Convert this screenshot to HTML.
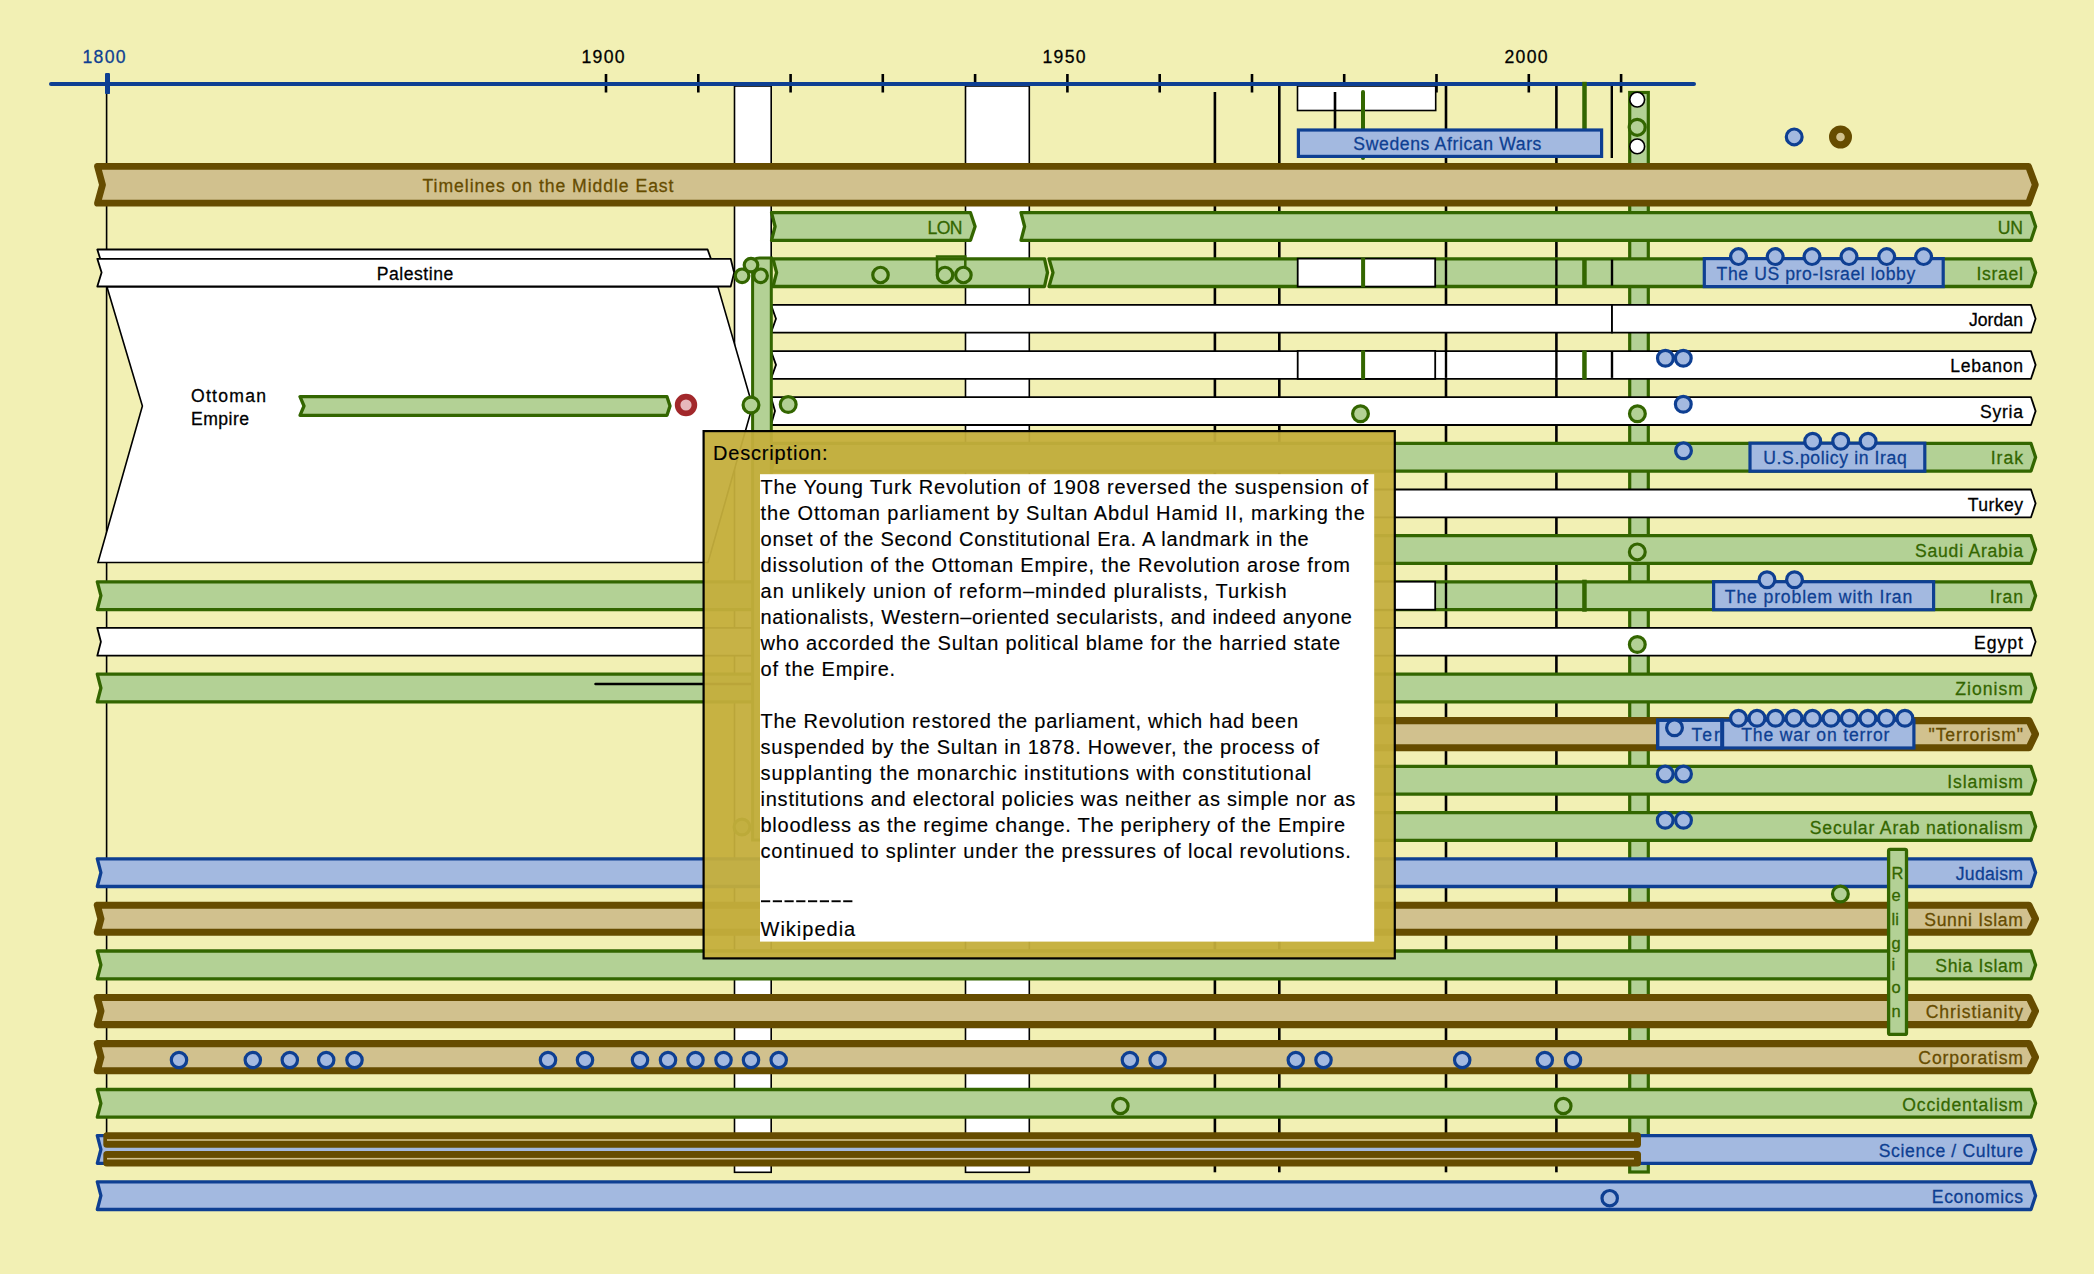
<!DOCTYPE html>
<html><head><meta charset="utf-8"><style>
html,body{margin:0;padding:0;background:#F2F0B4;width:2094px;height:1274px;overflow:hidden}
svg{display:block;font-family:"Liberation Sans",sans-serif}
</style></head><body>
<svg width="2094" height="1274" viewBox="0 0 2094 1274">
<rect width="2094" height="1274" fill="#F2F0B4"/>
<rect x="105" y="73" width="5" height="21" rx="1.5" fill="#0E3F92"/>
<rect x="604.7" y="74.0" width="2.6" height="18.5" fill="#000"/>
<rect x="697.0" y="74.0" width="2.6" height="18.5" fill="#000"/>
<rect x="789.3" y="74.0" width="2.6" height="18.5" fill="#000"/>
<rect x="881.5" y="74.0" width="2.6" height="18.5" fill="#000"/>
<rect x="973.8" y="74.0" width="2.6" height="18.5" fill="#000"/>
<rect x="1066.1" y="74.0" width="2.6" height="18.5" fill="#000"/>
<rect x="1158.4" y="74.0" width="2.6" height="18.5" fill="#000"/>
<rect x="1250.7" y="74.0" width="2.6" height="18.5" fill="#000"/>
<rect x="1342.9" y="74.0" width="2.6" height="18.5" fill="#000"/>
<rect x="1435.2" y="74.0" width="2.6" height="18.5" fill="#000"/>
<rect x="1527.5" y="74.0" width="2.6" height="18.5" fill="#000"/>
<rect x="1619.8" y="74.0" width="2.6" height="18.5" fill="#000"/>
<text x="104" y="63" text-anchor="middle" fill="#0E3F92" stroke="#0E3F92" stroke-width="0.28" font-size="17.6" textLength="43">1800</text>
<text x="603" y="63" text-anchor="middle" fill="#000" stroke="#000" stroke-width="0.28" font-size="17.6" textLength="43">1900</text>
<text x="1064" y="63" text-anchor="middle" fill="#000" stroke="#000" stroke-width="0.28" font-size="17.6" textLength="43">1950</text>
<text x="1526" y="63" text-anchor="middle" fill="#000" stroke="#000" stroke-width="0.28" font-size="17.6" textLength="43">2000</text>
<rect x="105.8" y="94.0" width="1.6" height="1046.0" fill="#000"/>
<rect x="734.5" y="86.0" width="36.7" height="1086.3" fill="#fff" stroke="#000" stroke-width="1.6"/>
<rect x="965.5" y="86.0" width="63.8" height="1086.3" fill="#fff" stroke="#000" stroke-width="1.6"/>
<rect x="1213.6" y="92.0" width="2.6" height="1080.3" fill="#000"/>
<rect x="1278.0" y="86.0" width="2.6" height="1086.3" fill="#000"/>
<rect x="1444.7" y="86.0" width="2.6" height="1086.3" fill="#000"/>
<rect x="1555.1" y="86.0" width="2.6" height="1086.3" fill="#000"/>
<rect x="1297.5" y="86.0" width="138.2" height="24.5" fill="#fff" stroke="#000" stroke-width="1.6"/>
<rect x="1333.7" y="92.0" width="2.6" height="38.0" fill="#000"/>
<line x1="1363" y1="92" x2="1363" y2="158" stroke="#336600" stroke-width="4" stroke-linecap="round"/>
<rect x="1610.6" y="86.0" width="2.4" height="72.0" fill="#000"/>
<rect x="1629.7" y="92.5" width="18.6" height="1079.5" fill="#B3D195" stroke="#336600" stroke-width="3.2"/>
<line x1="51" y1="84" x2="1694" y2="84" stroke="#0E3F92" stroke-width="4" stroke-linecap="round"/>
<rect x="105" y="73" width="5" height="21" rx="1.5" fill="#0E3F92"/>
<line x1="1584.5" y1="81.8" x2="1584.5" y2="158" stroke="#336600" stroke-width="4.5"/>
<path d="M97.5,166.4 L2028.5,166.4 L2035.3,184.8 L2028.5,203.2 L97.5,203.2 L102.5,184.8 Z" fill="#D1C18E" stroke="#664C00" stroke-width="6.8" stroke-linejoin="round"/>
<text x="548" y="192.3" text-anchor="middle" fill="#664C00" stroke="#664C00" stroke-width="0.28" font-size="17.6" textLength="251" lengthAdjust="spacing">Timelines on the Middle East</text>
<path d="M771.5,212.7 L970.5,212.7 L975.1,226.5 L970.5,240.3 L771.5,240.3 L775.1,226.5 Z" fill="#B3D195" stroke="#336600" stroke-width="3.3" stroke-linejoin="round"/>
<text x="962.5" y="233.7" text-anchor="end" fill="#336600" stroke="#336600" stroke-width="0.28" font-size="17.6" textLength="35.0" lengthAdjust="spacing">LON</text>
<path d="M1021.0,212.7 L2031.0,212.7 L2035.6,226.5 L2031.0,240.3 L1021.0,240.3 L1024.6,226.5 Z" fill="#B3D195" stroke="#336600" stroke-width="3.3" stroke-linejoin="round"/>
<text x="2023.0" y="233.7" text-anchor="end" fill="#336600" stroke="#336600" stroke-width="0.28" font-size="17.6" textLength="25.2" lengthAdjust="spacing">UN</text>
<path d="M97.3,249.5 L707.6,249.5 L711,259 L100.3,259 Z" fill="#fff" stroke="#000" stroke-width="1.8" stroke-linejoin="round"/>
<path d="M97.3,258.8 L730.7,258.8 L734.1,272.6 L730.7,286.5 L97.3,286.5 L101.6,272.6 Z" fill="#FFFFFF" stroke="#000000" stroke-width="1.8" stroke-linejoin="round"/>
<text x="453.3" y="279.8" text-anchor="end" fill="#000000" stroke="#000000" stroke-width="0.28" font-size="17.6" textLength="76.6" lengthAdjust="spacing">Palestine</text>
<path d="M773.0,258.8 L1044.5,258.8 L1047.5,272.6 L1044.5,286.5 L773.0,286.5 L776.6,272.6 Z" fill="#B3D195" stroke="#336600" stroke-width="3.3" stroke-linejoin="round"/>
<path d="M1049.0,258.8 L2031.0,258.8 L2035.6,272.6 L2031.0,286.5 L1049.0,286.5 L1053.0,272.6 Z" fill="#B3D195" stroke="#336600" stroke-width="3.3" stroke-linejoin="round"/>
<text x="2023.0" y="279.8" text-anchor="end" fill="#336600" stroke="#336600" stroke-width="0.28" font-size="17.6" textLength="46.5" lengthAdjust="spacing">Israel</text>
<rect x="1297.7" y="258.6" width="137.5" height="28.0" fill="#fff" stroke="#000" stroke-width="1.8"/>
<rect x="1361.1" y="258.1" width="4" height="29.0" fill="#336600"/>
<rect x="1582.2" y="258.1" width="4.5" height="29.0" fill="#336600"/>
<rect x="1444.8" y="259.6" width="2.4" height="26.0" fill="#000"/>
<rect x="1555.2" y="259.6" width="2.4" height="26.0" fill="#000"/>
<rect x="1610.8" y="259.6" width="2.4" height="26.0" fill="#000"/>
<path d="M771.0,304.9 L1612.0,304.9 L1612.0,332.7 L771.0,332.7 L776.0,318.8 Z" fill="#FFFFFF" stroke="#000000" stroke-width="1.8" stroke-linejoin="round"/>
<path d="M1612.0,304.9 L2031.0,304.9 L2035.6,318.8 L2031.0,332.7 L1612.0,332.7 Z" fill="#FFFFFF" stroke="#000000" stroke-width="1.8" stroke-linejoin="round"/>
<text x="2023.0" y="326.0" text-anchor="end" fill="#000000" stroke="#000000" stroke-width="0.28" font-size="17.6" textLength="54.1" lengthAdjust="spacing">Jordan</text>
<path d="M771.0,351.1 L2031.0,351.1 L2035.6,364.9 L2031.0,378.8 L771.0,378.8 L776.0,364.9 Z" fill="#FFFFFF" stroke="#000000" stroke-width="1.8" stroke-linejoin="round"/>
<text x="2023.0" y="372.1" text-anchor="end" fill="#000000" stroke="#000000" stroke-width="0.28" font-size="17.6" textLength="72.8" lengthAdjust="spacing">Lebanon</text>
<rect x="1297.7" y="350.9" width="137.5" height="28.0" fill="#fff" stroke="#000" stroke-width="1.8"/>
<rect x="1361.1" y="350.4" width="4" height="29.0" fill="#336600"/>
<rect x="1582.2" y="350.4" width="4.5" height="29.0" fill="#336600"/>
<rect x="1444.8" y="351.9" width="2.4" height="26.0" fill="#000"/>
<rect x="1555.2" y="351.9" width="2.4" height="26.0" fill="#000"/>
<rect x="1610.8" y="351.9" width="2.4" height="26.0" fill="#000"/>
<path d="M771.0,397.2 L2031.0,397.2 L2035.6,411.1 L2031.0,425.0 L771.0,425.0 L775.0,411.1 Z" fill="#FFFFFF" stroke="#000000" stroke-width="1.8" stroke-linejoin="round"/>
<text x="2023.0" y="418.3" text-anchor="end" fill="#000000" stroke="#000000" stroke-width="0.28" font-size="17.6" textLength="43.0" lengthAdjust="spacing">Syria</text>
<path d="M771.0,443.4 L2031.0,443.4 L2035.6,457.2 L2031.0,471.1 L771.0,471.1 L775.0,457.2 Z" fill="#B3D195" stroke="#336600" stroke-width="3.3" stroke-linejoin="round"/>
<text x="2023.0" y="464.4" text-anchor="end" fill="#336600" stroke="#336600" stroke-width="0.28" font-size="17.6" textLength="32.3" lengthAdjust="spacing">Irak</text>
<path d="M771.0,489.5 L2031.0,489.5 L2035.6,503.4 L2031.0,517.3 L771.0,517.3 L775.0,503.4 Z" fill="#FFFFFF" stroke="#000000" stroke-width="1.8" stroke-linejoin="round"/>
<text x="2023.0" y="510.6" text-anchor="end" fill="#000000" stroke="#000000" stroke-width="0.28" font-size="17.6" textLength="55.3" lengthAdjust="spacing">Turkey</text>
<path d="M771.0,535.7 L2031.0,535.7 L2035.6,549.5 L2031.0,563.4 L771.0,563.4 L775.0,549.5 Z" fill="#B3D195" stroke="#336600" stroke-width="3.3" stroke-linejoin="round"/>
<text x="2023.0" y="556.8" text-anchor="end" fill="#336600" stroke="#336600" stroke-width="0.28" font-size="17.6" textLength="107.9" lengthAdjust="spacing">Saudi Arabia</text>
<path d="M97.3,581.9 L2031.0,581.9 L2035.6,595.7 L2031.0,609.6 L97.3,609.6 L100.9,595.7 Z" fill="#B3D195" stroke="#336600" stroke-width="3.3" stroke-linejoin="round"/>
<text x="2023.0" y="602.9" text-anchor="end" fill="#336600" stroke="#336600" stroke-width="0.28" font-size="17.6" textLength="33.2" lengthAdjust="spacing">Iran</text>
<rect x="1297.7" y="581.7" width="137.5" height="28.0" fill="#fff" stroke="#000" stroke-width="1.8"/>
<rect x="1582.2" y="579.7" width="4.5" height="32.0" fill="#336600"/>
<rect x="1444.8" y="582.7" width="2.4" height="26.0" fill="#000"/>
<rect x="1555.2" y="582.7" width="2.4" height="26.0" fill="#000"/>
<path d="M97.3,627.9 L2031.0,627.9 L2035.6,641.8 L2031.0,655.7 L97.3,655.7 L100.9,641.8 Z" fill="#FFFFFF" stroke="#000000" stroke-width="1.8" stroke-linejoin="round"/>
<text x="2023.0" y="649.0" text-anchor="end" fill="#000000" stroke="#000000" stroke-width="0.28" font-size="17.6" textLength="49.1" lengthAdjust="spacing">Egypt</text>
<path d="M97.3,674.1 L2031.0,674.1 L2035.6,688.0 L2031.0,701.9 L97.3,701.9 L100.9,688.0 Z" fill="#B3D195" stroke="#336600" stroke-width="3.3" stroke-linejoin="round"/>
<text x="2023.0" y="695.2" text-anchor="end" fill="#336600" stroke="#336600" stroke-width="0.28" font-size="17.6" textLength="67.7" lengthAdjust="spacing">Zionism</text>
<line x1="595.5" y1="684" x2="760" y2="684" stroke="#000" stroke-width="2.5" stroke-linecap="round"/>
<path d="M771.0,720.6 L2029.0,720.6 L2035.5,734.1 L2029.0,747.7 L771.0,747.7 L775.0,734.1 Z" fill="#D1C18E" stroke="#664C00" stroke-width="7.1" stroke-linejoin="round"/>
<text x="2023.0" y="741.4" text-anchor="end" fill="#664C00" stroke="#664C00" stroke-width="0.28" font-size="17.6" textLength="94.4" lengthAdjust="spacing">"Terrorism"</text>
<path d="M771.0,766.4 L2031.0,766.4 L2035.6,780.3 L2031.0,794.1 L771.0,794.1 L775.0,780.3 Z" fill="#B3D195" stroke="#336600" stroke-width="3.3" stroke-linejoin="round"/>
<text x="2023.0" y="787.5" text-anchor="end" fill="#336600" stroke="#336600" stroke-width="0.28" font-size="17.6" textLength="75.7" lengthAdjust="spacing">Islamism</text>
<path d="M771.0,812.6 L2031.0,812.6 L2035.6,826.4 L2031.0,840.3 L771.0,840.3 L775.0,826.4 Z" fill="#B3D195" stroke="#336600" stroke-width="3.3" stroke-linejoin="round"/>
<text x="2023.0" y="833.6" text-anchor="end" fill="#336600" stroke="#336600" stroke-width="0.28" font-size="17.6" textLength="213.2" lengthAdjust="spacing">Secular Arab nationalism</text>
<path d="M97.3,858.8 L2031.0,858.8 L2035.6,872.6 L2031.0,886.5 L97.3,886.5 L100.9,872.6 Z" fill="#A3B9E0" stroke="#0E3F92" stroke-width="3.3" stroke-linejoin="round"/>
<text x="2023.0" y="879.8" text-anchor="end" fill="#0E3F92" stroke="#0E3F92" stroke-width="0.28" font-size="17.6" textLength="67.2" lengthAdjust="spacing">Judaism</text>
<path d="M97.3,905.2 L2029.0,905.2 L2035.5,918.8 L2029.0,932.3 L97.3,932.3 L100.9,918.8 Z" fill="#D1C18E" stroke="#664C00" stroke-width="7.1" stroke-linejoin="round"/>
<text x="2023.0" y="926.0" text-anchor="end" fill="#664C00" stroke="#664C00" stroke-width="0.28" font-size="17.6" textLength="98.8" lengthAdjust="spacing">Sunni Islam</text>
<path d="M97.3,951.0 L2031.0,951.0 L2035.6,964.9 L2031.0,978.8 L97.3,978.8 L100.9,964.9 Z" fill="#B3D195" stroke="#336600" stroke-width="3.3" stroke-linejoin="round"/>
<text x="2023.0" y="972.1" text-anchor="end" fill="#336600" stroke="#336600" stroke-width="0.28" font-size="17.6" textLength="87.7" lengthAdjust="spacing">Shia Islam</text>
<path d="M97.3,997.5 L2029.0,997.5 L2035.5,1011.0 L2029.0,1024.6 L97.3,1024.6 L100.9,1011.0 Z" fill="#D1C18E" stroke="#664C00" stroke-width="7.1" stroke-linejoin="round"/>
<text x="2023.0" y="1018.2" text-anchor="end" fill="#664C00" stroke="#664C00" stroke-width="0.28" font-size="17.6" textLength="97.3" lengthAdjust="spacing">Christianity</text>
<path d="M97.3,1043.6 L2029.0,1043.6 L2035.5,1057.2 L2029.0,1070.7 L97.3,1070.7 L100.9,1057.2 Z" fill="#D1C18E" stroke="#664C00" stroke-width="7.1" stroke-linejoin="round"/>
<text x="2023.0" y="1064.4" text-anchor="end" fill="#664C00" stroke="#664C00" stroke-width="0.28" font-size="17.6" textLength="104.7" lengthAdjust="spacing">Corporatism</text>
<path d="M97.3,1089.5 L2031.0,1089.5 L2035.6,1103.3 L2031.0,1117.2 L97.3,1117.2 L100.9,1103.3 Z" fill="#B3D195" stroke="#336600" stroke-width="3.3" stroke-linejoin="round"/>
<text x="2023.0" y="1110.5" text-anchor="end" fill="#336600" stroke="#336600" stroke-width="0.28" font-size="17.6" textLength="120.8" lengthAdjust="spacing">Occidentalism</text>
<path d="M97.3,1135.7 L2031.0,1135.7 L2035.6,1149.5 L2031.0,1163.3 L97.3,1163.3 L100.9,1149.5 Z" fill="#A3B9E0" stroke="#0E3F92" stroke-width="3.3" stroke-linejoin="round"/>
<text x="2023.0" y="1156.7" text-anchor="end" fill="#0E3F92" stroke="#0E3F92" stroke-width="0.28" font-size="17.6" textLength="144.3" lengthAdjust="spacing">Science / Culture</text>
<path d="M97.3,1181.8 L2031.0,1181.8 L2035.6,1195.7 L2031.0,1209.5 L97.3,1209.5 L100.9,1195.7 Z" fill="#A3B9E0" stroke="#0E3F92" stroke-width="3.3" stroke-linejoin="round"/>
<text x="2023.0" y="1202.9" text-anchor="end" fill="#0E3F92" stroke="#0E3F92" stroke-width="0.28" font-size="17.6" textLength="91.2" lengthAdjust="spacing">Economics</text>
<path d="M107,287 L718,287 L752.5,406 L708,562.5 L98,562.5 L142.4,406 Z" fill="#fff" stroke="#000" stroke-width="1.6"/>
<text x="191" y="402" fill="#000" stroke="#000" stroke-width="0.28" font-size="17.6" textLength="75">Ottoman</text>
<text x="191" y="424.5" fill="#000" stroke="#000" stroke-width="0.28" font-size="17.6" textLength="58">Empire</text>
<path d="M300.0,396.7 L667.0,396.7 L670.0,406.0 L667.0,415.3 L300.0,415.3 L304.0,406.0 Z" fill="#B3D195" stroke="#336600" stroke-width="3.3" stroke-linejoin="round"/>
<circle cx="686" cy="405" r="8.4" fill="#E6B8BC" stroke="#A2282B" stroke-width="5.6"/>
<path d="M752.6,265 Q752.6,258 759.5,258 L771.3,258 L771.3,840 L752.6,840 Z" fill="#B3D195" stroke="#336600" stroke-width="3"/>
<circle cx="742.1" cy="275.8" r="6.8" fill="#B3D195" stroke="#336600" stroke-width="3.2"/>
<circle cx="751.0" cy="265.1" r="6.8" fill="#B3D195" stroke="#336600" stroke-width="3.2"/>
<circle cx="760.6" cy="275.8" r="6.8" fill="#B3D195" stroke="#336600" stroke-width="3.2"/>
<circle cx="880.5" cy="275.0" r="7.75" fill="#B3D195" stroke="#336600" stroke-width="3.2"/>
<circle cx="945.0" cy="275.0" r="7.75" fill="#B3D195" stroke="#336600" stroke-width="3.2"/>
<circle cx="963.4" cy="275.0" r="7.75" fill="#B3D195" stroke="#336600" stroke-width="3.2"/>
<path d="M937,273 L937,256.5 L965.3,256.5 L965.3,268" fill="none" stroke="#336600" stroke-width="2.5"/>
<circle cx="751.0" cy="405.0" r="7.9" fill="#B3D195" stroke="#336600" stroke-width="3.2"/>
<circle cx="788.2" cy="404.5" r="7.9" fill="#B3D195" stroke="#336600" stroke-width="3.2"/>
<circle cx="742.0" cy="827.0" r="7.9" fill="#B3D195" stroke="#336600" stroke-width="3.2"/>
<rect x="1298.4" y="130.0" width="303.2" height="26.4" fill="#A3B9E0" stroke="#0E3F92" stroke-width="3.2"/>
<text x="1353.3" y="150.4" fill="#0E3F92" stroke="#0E3F92" stroke-width="0.28" font-size="17.6" textLength="188.1" lengthAdjust="spacing">Swedens African Wars</text>
<circle cx="1637.2" cy="99.6" r="7.4" fill="#FFFFFF" stroke="#000000" stroke-width="1.6"/>
<circle cx="1637.2" cy="127.3" r="8" fill="#B3D195" stroke="#336600" stroke-width="3.2"/>
<circle cx="1637.2" cy="146.4" r="7.4" fill="#FFFFFF" stroke="#000000" stroke-width="1.6"/>
<circle cx="1794.2" cy="136.9" r="7.9" fill="#A3B9E0" stroke="#0E3F92" stroke-width="3.2"/>
<circle cx="1840.5" cy="137" r="7.9" fill="#D1C18E" stroke="#664C00" stroke-width="7.2"/>
<rect x="1704.3" y="258.6" width="238.9" height="28.0" fill="#A3B9E0" stroke="#0E3F92" stroke-width="3.2"/>
<text x="1716.6" y="279.8" fill="#0E3F92" stroke="#0E3F92" stroke-width="0.28" font-size="17.6" textLength="198.6" lengthAdjust="spacing">The US pro-Israel lobby</text>
<circle cx="1738.5" cy="256.6" r="7.9" fill="#A3B9E0" stroke="#0E3F92" stroke-width="3.2"/>
<circle cx="1775.2" cy="256.6" r="7.9" fill="#A3B9E0" stroke="#0E3F92" stroke-width="3.2"/>
<circle cx="1812.0" cy="256.6" r="7.9" fill="#A3B9E0" stroke="#0E3F92" stroke-width="3.2"/>
<circle cx="1849.0" cy="256.6" r="7.9" fill="#A3B9E0" stroke="#0E3F92" stroke-width="3.2"/>
<circle cx="1886.7" cy="256.6" r="7.9" fill="#A3B9E0" stroke="#0E3F92" stroke-width="3.2"/>
<circle cx="1923.6" cy="256.6" r="7.9" fill="#A3B9E0" stroke="#0E3F92" stroke-width="3.2"/>
<circle cx="1665.4" cy="358.2" r="7.9" fill="#A3B9E0" stroke="#0E3F92" stroke-width="3.2"/>
<circle cx="1683.3" cy="358.2" r="7.9" fill="#A3B9E0" stroke="#0E3F92" stroke-width="3.2"/>
<circle cx="1360.5" cy="413.7" r="7.9" fill="#B3D195" stroke="#336600" stroke-width="3.2"/>
<circle cx="1637.4" cy="413.7" r="7.9" fill="#B3D195" stroke="#336600" stroke-width="3.2"/>
<circle cx="1683.3" cy="404.3" r="7.9" fill="#A3B9E0" stroke="#0E3F92" stroke-width="3.2"/>
<rect x="1750.0" y="443.2" width="174.8" height="28.0" fill="#A3B9E0" stroke="#0E3F92" stroke-width="3.2"/>
<text x="1763.2" y="464.4" fill="#0E3F92" stroke="#0E3F92" stroke-width="0.28" font-size="17.6" textLength="143.6" lengthAdjust="spacing">U.S.policy in Iraq</text>
<circle cx="1812.7" cy="441.2" r="7.9" fill="#A3B9E0" stroke="#0E3F92" stroke-width="3.2"/>
<circle cx="1840.7" cy="441.2" r="7.9" fill="#A3B9E0" stroke="#0E3F92" stroke-width="3.2"/>
<circle cx="1868.1" cy="441.2" r="7.9" fill="#A3B9E0" stroke="#0E3F92" stroke-width="3.2"/>
<circle cx="1683.5" cy="450.8" r="7.9" fill="#A3B9E0" stroke="#0E3F92" stroke-width="3.2"/>
<circle cx="1637.3" cy="551.9" r="7.9" fill="#B3D195" stroke="#336600" stroke-width="3.2"/>
<rect x="1713.6" y="581.7" width="220.0" height="28.0" fill="#A3B9E0" stroke="#0E3F92" stroke-width="3.2"/>
<text x="1724.8" y="602.9" fill="#0E3F92" stroke="#0E3F92" stroke-width="0.28" font-size="17.6" textLength="187.5" lengthAdjust="spacing">The problem with Iran</text>
<circle cx="1767.0" cy="579.7" r="7.9" fill="#A3B9E0" stroke="#0E3F92" stroke-width="3.2"/>
<circle cx="1794.5" cy="579.7" r="7.9" fill="#A3B9E0" stroke="#0E3F92" stroke-width="3.2"/>
<circle cx="1637.3" cy="644.5" r="7.9" fill="#B3D195" stroke="#336600" stroke-width="3.2"/>
<rect x="1657.6" y="720.2" width="64.4" height="27.8" fill="#A3B9E0" stroke="#0E3F92" stroke-width="3.2"/>
<text x="1691.5" y="741.4" fill="#0E3F92" stroke="#0E3F92" stroke-width="0.28" font-size="17.6" textLength="36" lengthAdjust="spacing">Terr</text>
<rect x="1657.6" y="720.2" width="64.4" height="27.8" fill="none" stroke="#0E3F92" stroke-width="3.2"/>
<circle cx="1674.5" cy="727.7" r="7.9" fill="#A3B9E0" stroke="#0E3F92" stroke-width="3.2"/>
<rect x="1722.6" y="720.2" width="191.3" height="27.8" fill="#A3B9E0" stroke="#0E3F92" stroke-width="3.2"/>
<text x="1741.2" y="741.4" fill="#0E3F92" stroke="#0E3F92" stroke-width="0.28" font-size="17.6" textLength="148.2" lengthAdjust="spacing">The war on terror</text>
<circle cx="1738.5" cy="718.2" r="7.9" fill="#A3B9E0" stroke="#0E3F92" stroke-width="3.2"/>
<circle cx="1757.0" cy="718.2" r="7.9" fill="#A3B9E0" stroke="#0E3F92" stroke-width="3.2"/>
<circle cx="1775.5" cy="718.2" r="7.9" fill="#A3B9E0" stroke="#0E3F92" stroke-width="3.2"/>
<circle cx="1794.0" cy="718.2" r="7.9" fill="#A3B9E0" stroke="#0E3F92" stroke-width="3.2"/>
<circle cx="1812.5" cy="718.2" r="7.9" fill="#A3B9E0" stroke="#0E3F92" stroke-width="3.2"/>
<circle cx="1831.0" cy="718.2" r="7.9" fill="#A3B9E0" stroke="#0E3F92" stroke-width="3.2"/>
<circle cx="1849.4" cy="718.2" r="7.9" fill="#A3B9E0" stroke="#0E3F92" stroke-width="3.2"/>
<circle cx="1867.9" cy="718.2" r="7.9" fill="#A3B9E0" stroke="#0E3F92" stroke-width="3.2"/>
<circle cx="1886.4" cy="718.2" r="7.9" fill="#A3B9E0" stroke="#0E3F92" stroke-width="3.2"/>
<circle cx="1904.9" cy="718.2" r="7.9" fill="#A3B9E0" stroke="#0E3F92" stroke-width="3.2"/>
<circle cx="1665.2" cy="774.0" r="7.9" fill="#A3B9E0" stroke="#0E3F92" stroke-width="3.2"/>
<circle cx="1683.5" cy="774.0" r="7.9" fill="#A3B9E0" stroke="#0E3F92" stroke-width="3.2"/>
<circle cx="1665.2" cy="820.2" r="7.9" fill="#A3B9E0" stroke="#0E3F92" stroke-width="3.2"/>
<circle cx="1683.5" cy="820.2" r="7.9" fill="#A3B9E0" stroke="#0E3F92" stroke-width="3.2"/>
<circle cx="1840.4" cy="894.0" r="7.9" fill="#B3D195" stroke="#336600" stroke-width="3.2"/>
<rect x="1888.6" y="849.3" width="17.9" height="185.1" rx="1.5" fill="#B3D195" stroke="#336600" stroke-width="3.3"/>
<text x="1891.6" y="878.5" fill="#336600" stroke="#336600" stroke-width="0.28" font-size="16.5">R</text>
<text x="1891.6" y="901" fill="#336600" stroke="#336600" stroke-width="0.28" font-size="16.5">e</text>
<text x="1891.6" y="924.8" fill="#336600" stroke="#336600" stroke-width="0.28" font-size="16.5">li</text>
<text x="1891.6" y="948.5" fill="#336600" stroke="#336600" stroke-width="0.28" font-size="16.5">g</text>
<text x="1891.6" y="970.3" fill="#336600" stroke="#336600" stroke-width="0.28" font-size="16.5">i</text>
<text x="1891.6" y="993" fill="#336600" stroke="#336600" stroke-width="0.28" font-size="16.5">o</text>
<text x="1891.6" y="1016.6" fill="#336600" stroke="#336600" stroke-width="0.28" font-size="16.5">n</text>
<circle cx="179.0" cy="1060.0" r="7.7" fill="#A3B9E0" stroke="#0E3F92" stroke-width="3.2"/>
<circle cx="252.8" cy="1060.0" r="7.7" fill="#A3B9E0" stroke="#0E3F92" stroke-width="3.2"/>
<circle cx="289.8" cy="1060.0" r="7.7" fill="#A3B9E0" stroke="#0E3F92" stroke-width="3.2"/>
<circle cx="326.2" cy="1060.0" r="7.7" fill="#A3B9E0" stroke="#0E3F92" stroke-width="3.2"/>
<circle cx="354.5" cy="1060.0" r="7.7" fill="#A3B9E0" stroke="#0E3F92" stroke-width="3.2"/>
<circle cx="548.0" cy="1060.0" r="7.7" fill="#A3B9E0" stroke="#0E3F92" stroke-width="3.2"/>
<circle cx="585.0" cy="1060.0" r="7.7" fill="#A3B9E0" stroke="#0E3F92" stroke-width="3.2"/>
<circle cx="640.0" cy="1060.0" r="7.7" fill="#A3B9E0" stroke="#0E3F92" stroke-width="3.2"/>
<circle cx="668.0" cy="1060.0" r="7.7" fill="#A3B9E0" stroke="#0E3F92" stroke-width="3.2"/>
<circle cx="695.5" cy="1060.0" r="7.7" fill="#A3B9E0" stroke="#0E3F92" stroke-width="3.2"/>
<circle cx="723.5" cy="1060.0" r="7.7" fill="#A3B9E0" stroke="#0E3F92" stroke-width="3.2"/>
<circle cx="751.0" cy="1060.0" r="7.7" fill="#A3B9E0" stroke="#0E3F92" stroke-width="3.2"/>
<circle cx="778.7" cy="1060.0" r="7.7" fill="#A3B9E0" stroke="#0E3F92" stroke-width="3.2"/>
<circle cx="1129.9" cy="1060.0" r="7.7" fill="#A3B9E0" stroke="#0E3F92" stroke-width="3.2"/>
<circle cx="1157.6" cy="1060.0" r="7.7" fill="#A3B9E0" stroke="#0E3F92" stroke-width="3.2"/>
<circle cx="1295.8" cy="1060.0" r="7.7" fill="#A3B9E0" stroke="#0E3F92" stroke-width="3.2"/>
<circle cx="1323.5" cy="1060.0" r="7.7" fill="#A3B9E0" stroke="#0E3F92" stroke-width="3.2"/>
<circle cx="1462.2" cy="1060.0" r="7.7" fill="#A3B9E0" stroke="#0E3F92" stroke-width="3.2"/>
<circle cx="1544.8" cy="1060.0" r="7.7" fill="#A3B9E0" stroke="#0E3F92" stroke-width="3.2"/>
<circle cx="1573.0" cy="1060.0" r="7.7" fill="#A3B9E0" stroke="#0E3F92" stroke-width="3.2"/>
<circle cx="1120.4" cy="1106.0" r="7.7" fill="#B3D195" stroke="#336600" stroke-width="3.2"/>
<circle cx="1563.3" cy="1106.0" r="7.7" fill="#B3D195" stroke="#336600" stroke-width="3.2"/>
<rect x="103.3" y="1132.3" width="1537.7" height="15.4" rx="3.5" fill="#664C00"/>
<rect x="107" y="1139.2" width="1527" height="1.6" fill="#D1C18E"/>
<rect x="103.3" y="1151.0" width="1537.7" height="15.4" rx="3.5" fill="#664C00"/>
<rect x="107" y="1157.9" width="1527" height="1.6" fill="#D1C18E"/>
<circle cx="1609.7" cy="1198.2" r="7.7" fill="#A3B9E0" stroke="#0E3F92" stroke-width="3.2"/>
<rect x="703.6" y="431.1" width="691.2" height="527.3" fill="#C4AE3C" fill-opacity="0.95" stroke="#000" stroke-width="2.2"/>
<text x="713" y="459.6" fill="#000" stroke="#000" stroke-width="0.15" font-size="20" textLength="114.6" lengthAdjust="spacing">Description:</text>
<rect x="760" y="474.2" width="614.2" height="467.4" fill="#fff"/>
<text x="760.5" y="494" fill="#000" stroke="#000" stroke-width="0.15" font-size="20" textLength="607.6" lengthAdjust="spacing">The Young Turk Revolution of 1908 reversed the suspension of</text>
<text x="760.5" y="520" fill="#000" stroke="#000" stroke-width="0.15" font-size="20" textLength="604.4" lengthAdjust="spacing">the Ottoman parliament by Sultan Abdul Hamid II, marking the</text>
<text x="760.5" y="546" fill="#000" stroke="#000" stroke-width="0.15" font-size="20" textLength="548.2" lengthAdjust="spacing">onset of the Second Constitutional Era. A landmark in the</text>
<text x="760.5" y="572" fill="#000" stroke="#000" stroke-width="0.15" font-size="20" textLength="589.3" lengthAdjust="spacing">dissolution of the Ottoman Empire, the Revolution arose from</text>
<text x="760.5" y="598" fill="#000" stroke="#000" stroke-width="0.15" font-size="20" textLength="526.0" lengthAdjust="spacing">an unlikely union of reform–minded pluralists, Turkish</text>
<text x="760.5" y="624" fill="#000" stroke="#000" stroke-width="0.15" font-size="20" textLength="591.4" lengthAdjust="spacing">nationalists, Western–oriented secularists, and indeed anyone</text>
<text x="760.5" y="650" fill="#000" stroke="#000" stroke-width="0.15" font-size="20" textLength="579.5" lengthAdjust="spacing">who accorded the Sultan political blame for the harried state</text>
<text x="760.5" y="676" fill="#000" stroke="#000" stroke-width="0.15" font-size="20" textLength="134.6" lengthAdjust="spacing">of the Empire.</text>
<text x="760.5" y="728" fill="#000" stroke="#000" stroke-width="0.15" font-size="20" textLength="537.6" lengthAdjust="spacing">The Revolution restored the parliament, which had been</text>
<text x="760.5" y="754" fill="#000" stroke="#000" stroke-width="0.15" font-size="20" textLength="558.5" lengthAdjust="spacing">suspended by the Sultan in 1878. However, the process of</text>
<text x="760.5" y="780" fill="#000" stroke="#000" stroke-width="0.15" font-size="20" textLength="550.8" lengthAdjust="spacing">supplanting the monarchic institutions with constitutional</text>
<text x="760.5" y="806" fill="#000" stroke="#000" stroke-width="0.15" font-size="20" textLength="594.8" lengthAdjust="spacing">institutions and electoral policies was neither as simple nor as</text>
<text x="760.5" y="832" fill="#000" stroke="#000" stroke-width="0.15" font-size="20" textLength="584.5" lengthAdjust="spacing">bloodless as the regime change. The periphery of the Empire</text>
<text x="760.5" y="858" fill="#000" stroke="#000" stroke-width="0.15" font-size="20" textLength="590.4" lengthAdjust="spacing">continued to splinter under the pressures of local revolutions.</text>
<text x="760.5" y="936" fill="#000" stroke="#000" stroke-width="0.15" font-size="20" textLength="94.7" lengthAdjust="spacing">Wikipedia</text>
<rect x="761.0" y="900.3" width="9.2" height="1.9" fill="#000"/>
<rect x="772.8" y="900.3" width="9.2" height="1.9" fill="#000"/>
<rect x="784.5" y="900.3" width="9.2" height="1.9" fill="#000"/>
<rect x="796.2" y="900.3" width="9.2" height="1.9" fill="#000"/>
<rect x="808.0" y="900.3" width="9.2" height="1.9" fill="#000"/>
<rect x="819.8" y="900.3" width="9.2" height="1.9" fill="#000"/>
<rect x="831.5" y="900.3" width="9.2" height="1.9" fill="#000"/>
<rect x="843.2" y="900.3" width="9.2" height="1.9" fill="#000"/>
</svg>
</body></html>
